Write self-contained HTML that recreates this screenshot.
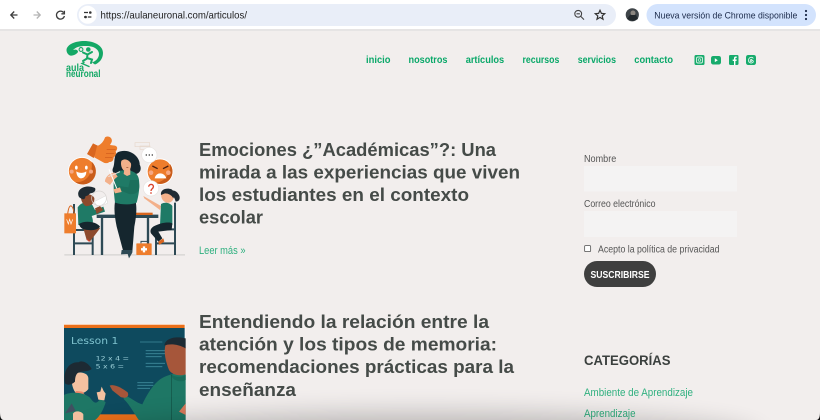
<!DOCTYPE html>
<html lang="es">
<head>
<meta charset="utf-8">
<title>Artículos - Aula Neuronal</title>
<style>
html,body{margin:0;padding:0;width:820px;height:420px;overflow:hidden;background:#f2eeed}
svg{display:block}
text{font-family:"Liberation Sans",sans-serif}
.h{font-size:18.5px;font-weight:700;fill:#454b48}
.nav{font-size:10px;font-weight:700;fill:#0aa869}
.lab{font-size:10px;fill:#555}
.lnk{font-size:11px;fill:#2fb07f}
</style>
</head>
<body>
<svg width="820" height="420" viewBox="0 0 820 420" xmlns="http://www.w3.org/2000/svg">
<defs>
<filter id="b" x="-20%" y="-150%" width="140%" height="400%"><feGaussianBlur stdDeviation="13"/></filter>
<clipPath id="c2"><rect x="64" y="324" width="122" height="96"/></clipPath>
<clipPath id="page"><rect width="820" height="420"/></clipPath>
</defs>
<g clip-path="url(#page)">
<rect width="820" height="420" fill="#f2eeed"/>

<!-- Chrome toolbar -->
<rect width="820" height="29" fill="#fff"/>
<rect y="29" width="820" height="2" fill="#e6e4e4"/>
<path d="M17.5 15H11M14.2 11.5L10.8 15l3.4 3.5" fill="none" stroke="#3c3c3c" stroke-width="1.3"/>
<path d="M33.5 15H40M36.8 11.5L40.2 15l-3.4 3.5" fill="none" stroke="#b4b4b4" stroke-width="1.3"/>
<path d="M63.6 12.6A4 4 0 1 0 64.4 16M64.4 10.8v3h-3" fill="none" stroke="#3c3c3c" stroke-width="1.3"/>
<rect x="77" y="4" width="539" height="22" rx="11" fill="#e9eef8"/>
<circle cx="87.7" cy="14.8" r="9" fill="#fff"/>
<path d="M84 12.5h4M84 17h1M87.8 17h3.600" stroke="#333" stroke-width="1.2" fill="none"/>
<circle cx="90.3" cy="12.5" r="1.3" fill="#333"/><circle cx="85.6" cy="17" r="1.3" fill="#333"/>
<text x="100.5" y="18.6" font-size="10.5" fill="#222" textLength="146.5" lengthAdjust="spacingAndGlyphs">https://aulaneuronal.com/articulos/</text>
<circle cx="578.2" cy="13.8" r="3.4" fill="none" stroke="#444" stroke-width="1.1"/>
<path d="M580.8 16.4l3.2 3.2M576.5 13.8h3.4" stroke="#444" stroke-width="1.1"/>
<path d="M600 10.3l1.4 3.1 3.3.3-2.5 2.2.8 3.3-3-1.8-3 1.8.8-3.3-2.5-2.2 3.3-.3z" fill="none" stroke="#333" stroke-width="1.2"/>
<circle cx="632.3" cy="14.8" r="6.6" fill="#3e4448"/>
<circle cx="633" cy="13" r="2.5" fill="#8b8680"/><path d="M627 19l3-4 6 0 2 4-5 2z" fill="#22282c"/>
<rect x="646.5" y="4" width="169.5" height="22" rx="11" fill="#d3e3fd"/>
<text x="654.3" y="18.4" font-size="9.5" fill="#1b2a4a" textLength="143" lengthAdjust="spacingAndGlyphs">Nueva versión de Chrome disponible</text>
<circle cx="806" cy="11" r="1.1" fill="#1b2a4a"/><circle cx="806" cy="15" r="1.1" fill="#1b2a4a"/><circle cx="806" cy="19" r="1.1" fill="#1b2a4a"/>

<!-- Logo -->
<path d="M66.5 50C67 44 76 41 84 41C95 41 103 46 103 53C103 59 99 63 95 64.500L92 62.500C96 61 99 58 99 54C99 49 93 45.500 85 46C80 46 76 47 73 50C76 49 78 50 78 52C76 55 72 56 70 55.500C68 54.500 66.500 52.500 66.500 50z" fill="#14a866"/>
<g fill="none" stroke="#14a866" stroke-linecap="round">
<path d="M83 52.500l4.500 2 4.500-2.500M87.500 54.500l-.5 4-4 2.500M87 58l5 1.500-1 3.500" stroke-width="2"/>
<path d="M84 62.500l-2 1 7 3" stroke-width="1.400"/>
</g>
<circle cx="88.300" cy="49.500" r="2.300" fill="#14a866"/>
<circle cx="81" cy="49.500" r="1.900" fill="none" stroke="#14a866" stroke-width="1.100"/>
<text x="66" y="71" font-size="10" font-weight="700" fill="#14a866" textLength="18" lengthAdjust="spacingAndGlyphs">aula</text>
<text x="66" y="77" font-size="10" font-weight="700" fill="#14a866" textLength="34.500" lengthAdjust="spacingAndGlyphs">neuronal</text>

<!-- Nav -->
<text class="nav" x="366" y="63" textLength="24.500" lengthAdjust="spacingAndGlyphs">inicio</text>
<text class="nav" x="408.500" y="63" textLength="39" lengthAdjust="spacingAndGlyphs">nosotros</text>
<text class="nav" x="465.700" y="63" textLength="38.500" lengthAdjust="spacingAndGlyphs">artículos</text>
<text class="nav" x="522.500" y="63" textLength="36.800" lengthAdjust="spacingAndGlyphs">recursos</text>
<text class="nav" x="577.700" y="63" textLength="38.300" lengthAdjust="spacingAndGlyphs">servicios</text>
<text class="nav" x="634.300" y="63" textLength="38.700" lengthAdjust="spacingAndGlyphs">contacto</text>

<!-- Social icons -->
<rect x="694.500" y="55" width="10" height="10" rx="1.500" fill="#17ab6c"/>
<rect x="696.500" y="57" width="6" height="6" rx="1.500" fill="none" stroke="#d9f0e6" stroke-width=".9"/>
<circle cx="699.500" cy="60" r="1.300" fill="none" stroke="#d9f0e6" stroke-width=".7"/>
<rect x="711" y="56" width="10" height="8.500" rx="2.200" fill="#17ab6c"/>
<path d="M714.800 58.300v3.800l3-1.900z" fill="#fff"/>
<rect x="729" y="55" width="9.500" height="10" rx="1.200" fill="#17ab6c"/>
<path d="M734 65v-4h-1.300v-1.500H734v-1.300c0-1.100.7-1.700 1.700-1.700h1v1.400h-.6c-.5 0-.7.2-.7.7v.9h1.300l-.2 1.500h-1.100v4z" fill="#fff"/>
<rect x="746" y="55" width="10" height="10" rx="2.200" fill="#17ab6c"/>
<path d="M753.300 58.500C752.800 57 750 56.800 749 58.500C748 60.200 748.300 62.500 750.500 63C752.500 63.300 753.800 62 753.200 60.800C752.500 59.700 750 60 750 61.200C750.200 62.200 752 62 752.100 60.500C752.100 59.200 751 59 750.300 59.600" fill="none" stroke="#e6f6ef" stroke-width=".8"/>

<!-- Illustration 1 -->
<g transform="translate(55 130) scale(.33333)">
<rect x="28" y="372" width="362" height="5" fill="#dcdad8"/>
<rect x="240" y="38" width="44" height="12" fill="none" stroke="#e8d8cc" stroke-width="2"/>
<rect x="255" y="48" width="30" height="10" fill="none" stroke="#e8d8cc" stroke-width="2"/>
<!-- thumb -->
<path d="M114 40L96 72L116 84L134 50z" fill="#d9661f"/>
<path d="M126 48C138 44 146 34 150 22C160 15 174 24 170 36L165 45L180 47C190 50 187 60 182 64C186 72 180 80 176 82C176 92 170 96 163 96C158 101 150 100 145 97L118 82z" fill="#ee7d2c"/>
<path d="M155 58H182M153 70H178M150 82H172" stroke="#cf5a18" stroke-width="2"/>
<!-- smiley -->
<circle cx="81" cy="123" r="42" fill="#fff"/>
<circle cx="81" cy="123" r="39.500" fill="#ee7d2c"/>
<path d="M110 95A39.500 39.500 0 0 1 60 156C90 160 115 135 110 95z" fill="#c95c1a"/>
<ellipse cx="64" cy="113" rx="4" ry="6" fill="#fff"/><ellipse cx="94" cy="113" rx="4" ry="6" fill="#fff"/>
<path d="M64 124C72 130 86 130 94 124C94 140 84 145 78 145C70 145 64 135 64 124z" fill="#fff"/>
<circle cx="50" cy="125" r="6" fill="#f6a883"/><circle cx="108" cy="125" r="6" fill="#f6a883"/>
<!-- angry -->
<circle cx="315" cy="125" r="40" fill="#fff"/>
<circle cx="315" cy="125" r="37" fill="#ee7d2c"/>
<path d="M345 102A37 37 0 0 1 300 158C325 158 348 135 345 102z" fill="#c95c1a"/>
<path d="M292 108l16 8M340 108l-16 8" stroke="#4a2012" stroke-width="4"/>
<path d="M299 145C303 125 328 125 334 145z" fill="#fff"/>
<circle cx="288" cy="128" r="7" fill="#f6a883"/><circle cx="340" cy="128" r="7" fill="#f6a883"/>
<!-- bubbles -->
<circle cx="283" cy="75" r="23" fill="#fff" stroke="#e8e4e2" stroke-width="2"/>
<rect x="272" y="73" width="4" height="4" fill="#444"/><rect x="281" y="73" width="4" height="4" fill="#444"/><rect x="290" y="73" width="4" height="4" fill="#444"/>
<circle cx="288" cy="175" r="23" fill="#fff" stroke="#e8e4e2" stroke-width="2"/>
<path d="M281 170C282 160 297 162 295 171C294 177 288 176 288 183" fill="none" stroke="#d9422c" stroke-width="4"/>
<circle cx="288" cy="189" r="2.500" fill="#d9422c"/>
<!-- chairs -->
<path d="M57 222V375M113 300V375M57 300H113M57 340H113" stroke="#2e4a55" stroke-width="6" fill="none"/>
<path d="M360 218V375M303 300V375M303 298H360M303 340H360" stroke="#2e4a55" stroke-width="6" fill="none"/>
<!-- bag -->
<path d="M38 252C42 220 52 220 58 250" fill="none" stroke="#d9661f" stroke-width="3"/>
<rect x="28" y="250" width="35" height="60" fill="#ee7d2c"/>
<path d="M35 268l5 14 4-14 4 14 5-14" stroke="#fff" stroke-width="2" fill="none"/>
<!-- left kid -->
<path d="M85 295C95 285 125 285 135 295L112 325L104 335L95 330z" fill="#8d4a2d"/>
<path d="M68 232C82 212 105 215 112 225L120 240L145 230L150 245L110 258C115 270 115 280 110 285H70z" fill="#1f7a66"/>
<path d="M72 282C90 270 125 275 135 290C130 300 110 302 100 300C85 300 75 295 72 282z" fill="#16262e"/>
<path d="M78 196C88 190 112 190 118 204C120 220 106 230 92 228C84 224 76 210 78 196z" fill="#8d4a2d"/>
<path d="M70 195C66 175 95 162 120 174C125 185 112 190 105 190C100 196 96 198 92 198C90 208 86 210 80 206C75 205 70 200 70 195z" fill="#1f2b33"/>
<path d="M118 215l35-18 5 22-28 14z" fill="#fff" stroke="#c9c6c4"/>
<path d="M120 235L135 228L145 240L125 252z" fill="#8d4a2d"/>
<circle cx="132" cy="205" r="22" fill="none" stroke="#d8d4d2" stroke-width="2"/>
<!-- table -->
<path d="M125 254H310V264H125z" fill="#2e4a55"/>
<path d="M141 264V375M279 264V375" stroke="#2e4a55" stroke-width="7"/>
<rect x="243" y="248" width="50" height="7" fill="#d9661f"/>
<!-- teacher -->
<path d="M196 64C172 68 182 100 174 114C168 128 182 136 196 132H236C254 134 262 118 254 104C256 84 230 56 196 64z" fill="#15262e"/>
<path d="M180 215C176 240 180 265 185 290L205 365H232L238 290C244 260 246 235 242 215z" fill="#15262e"/>
<path d="M200 360H232V368L222 385L218 372L198 373z" fill="#2e4a55"/>
<path d="M195 122C170 130 175 175 180 218C200 225 230 225 245 218C250 200 255 175 252 150C250 130 235 124 220 120z" fill="#1f7a66"/>
<path d="M250 150C258 180 250 195 222 192L185 176L190 168L220 172L225 150z" fill="#1b6f5c"/>
<path d="M180 128C160 128 150 145 150 155L165 165C172 155 180 145 188 140z" fill="#f3b08a"/>
<path d="M175 178L195 172L200 186L180 190z" fill="#f3b08a"/>
<path d="M208 118H226V134L216 138L206 132z" fill="#f3b08a"/>
<path d="M203 86C212 82 226 90 228 100C230 115 222 126 212 124C204 122 198 112 198 100C198 94 200 90 203 86z" fill="#f3b08a"/>
<path d="M200 92C208 84 222 88 230 104C234 88 222 74 208 76C200 78 196 86 200 92z" fill="#15262e"/>
<path d="M214 112h6" stroke="#8d4a2d" stroke-width="2"/>
<path d="M162 118L185 175" stroke="#fff" stroke-width="3"/><path d="M160 140L195 125" stroke="#e8e4e2" stroke-width="3"/>
<!-- girl -->
<path d="M345 185C352 178 365 182 372 195C378 208 370 215 362 215C358 200 352 195 345 185z" fill="#1f2b33"/>
<path d="M320 185C325 175 350 178 355 190C360 205 352 220 335 218C322 215 315 200 320 185z" fill="#f3b08a"/>
<path d="M318 195C315 178 335 172 350 178C358 185 360 195 355 205C350 195 340 190 330 190z" fill="#1f2b33"/>
<path d="M265 198L318 228L315 240L268 205z" fill="#f3b08a"/>
<path d="M318 222C330 215 345 218 352 228L352 285H315z" fill="#1f7a66"/>
<path d="M352 280C345 275 320 278 305 285C290 290 283 300 288 310L310 335L322 325L310 305L350 300z" fill="#15262e"/>
<path d="M310 335L325 325L328 335L312 345z" fill="#d9661f"/>
<!-- kit -->
<path d="M258 340V334H278V340" fill="none" stroke="#2e4a55" stroke-width="3"/>
<rect x="244" y="340" width="46" height="35" rx="2" fill="#ee7d2c"/>
<path d="M258 358h18M267 349v18" stroke="#fff" stroke-width="7"/>
<path d="M95 325L108 335L100 334z" fill="#d9422c"/>
</g>

<!-- Illustration 2 -->
<g clip-path="url(#c2)">
<g transform="translate(55 315) scale(.33333)">
<rect x="27" y="27" width="364" height="290" fill="#fff"/>
<rect x="27" y="29" width="362" height="10" fill="#ea6f1a"/>
<rect x="27" y="39" width="362" height="260" fill="#0e4a5e"/>
<rect x="120" y="298" width="176" height="17" fill="#ea6f1a"/>
<text x="48" y="87" font-size="30" fill="#7fc3cf" textLength="142" lengthAdjust="spacingAndGlyphs" style="font-family:'DejaVu Sans',sans-serif">Lesson 1</text>
<text x="122" y="136" font-size="18" fill="#9dd0d9" textLength="100" lengthAdjust="spacingAndGlyphs" style="font-family:'DejaVu Sans',sans-serif">12 x 4 =</text>
<text x="122" y="161" font-size="18" fill="#9dd0d9" textLength="85" lengthAdjust="spacingAndGlyphs" style="font-family:'DejaVu Sans',sans-serif">5 x 6 =</text>
<g stroke="#3f8a9c" stroke-width="2.500">
<path d="M255 81H322M272 107H330M272 116H330M272 125H320M272 145H330M272 155H322M247 203H295M247 211H295M247 220H285"/>
</g>
<!-- man -->
<path d="M206 240C225 245 240 262 262 268C275 240 295 205 320 190C345 175 380 172 392 178V320H255C240 300 225 270 206 252z" fill="#1e7765"/>
<path d="M164 212C178 205 205 222 218 232C224 245 212 252 197 246L172 226z" fill="#a6563a"/>
<path d="M332 88C352 78 392 85 392 100V178C370 185 350 178 342 165C332 140 325 110 332 88z" fill="#a6563a"/>
<path d="M328 92C330 70 360 62 392 70V100C370 88 345 85 328 92z" fill="#1d2a33"/>
<path d="M345 175C355 185 375 190 392 180V195C375 205 350 195 345 175z" fill="#186b5a"/>
<path d="M350 180V320" stroke="#135245" stroke-width="2"/>
<path d="M372 290L392 265V300z" fill="#d9795a"/>
<!-- boy -->
<path d="M52 180C75 165 100 175 100 190V222C90 238 65 238 58 228C50 212 48 195 52 180z" fill="#f4c1a0"/>
<path d="M30 205C22 165 45 140 70 142C85 132 105 150 110 162C100 170 85 168 72 172C62 175 60 190 60 200C50 210 38 212 30 205z" fill="#1d2a33"/>
<path d="M56 238L64 228L82 230L90 240L75 250z" fill="#ef8467"/>
<path d="M27 240C45 230 85 230 105 248C120 270 125 265 138 250L152 262C145 285 130 315 110 320H27z" fill="#1e7765"/>
<path d="M125 232L136 230L140 215L146 228L152 236L148 256L130 254z" fill="#f4c1a0"/>
<path d="M30 295L50 265L62 288z" fill="#405060"/>
<path d="M54 296C60 285 80 288 85 298V320H54z" fill="#f4c1a0"/>
</g>
</g>

<!-- Articles -->
<text class="h" x="199" y="156" textLength="297" lengthAdjust="spacingAndGlyphs">Emociones ¿”Académicas”?: Una</text>
<text class="h" x="199" y="178.600" textLength="321" lengthAdjust="spacingAndGlyphs">mirada a las experiencias que viven</text>
<text class="h" x="199" y="201" textLength="270" lengthAdjust="spacingAndGlyphs">los estudiantes en el contexto</text>
<text class="h" x="199" y="223.500" textLength="64" lengthAdjust="spacingAndGlyphs">escolar</text>
<text class="lnk" x="199" y="254" textLength="46.500" lengthAdjust="spacingAndGlyphs">Leer más »</text>

<text class="h" x="199" y="328" textLength="290" lengthAdjust="spacingAndGlyphs">Entendiendo la relación entre la</text>
<text class="h" x="199" y="350.500" textLength="298" lengthAdjust="spacingAndGlyphs">atención y los tipos de memoria:</text>
<text class="h" x="199" y="373" textLength="315" lengthAdjust="spacingAndGlyphs">recomendaciones prácticas para la</text>
<text class="h" x="199" y="396" textLength="97" lengthAdjust="spacingAndGlyphs">enseñanza</text>

<!-- Sidebar form -->
<text class="lab" x="584" y="162" textLength="32.300" lengthAdjust="spacingAndGlyphs">Nombre</text>
<rect x="584" y="166" width="153" height="25.500" fill="#f4f3f3"/>
<text class="lab" x="584" y="207" textLength="71.500" lengthAdjust="spacingAndGlyphs">Correo electrónico</text>
<rect x="584" y="211" width="153" height="26" fill="#f4f3f3"/>
<rect x="584.600" y="245.600" width="6" height="6" rx="1" fill="#fff" stroke="#666" stroke-width=".9"/>
<text class="lab" x="598" y="252.500" textLength="121.500" lengthAdjust="spacingAndGlyphs">Acepto la política de privacidad</text>
<rect x="584" y="261" width="72" height="26" rx="13" fill="#3f3f3f"/>
<text x="590.500" y="277.800" font-size="10" font-weight="700" fill="#fff" textLength="59" lengthAdjust="spacingAndGlyphs">SUSCRIBIRSE</text>

<text x="584" y="365" font-size="13.500" font-weight="700" fill="#3b403e" textLength="86.500" lengthAdjust="spacingAndGlyphs">CATEGORÍAS</text>
<text class="lnk" x="584" y="396" textLength="109" lengthAdjust="spacingAndGlyphs">Ambiente de Aprendizaje</text>
<text class="lnk" x="584" y="417" textLength="51.500" lengthAdjust="spacingAndGlyphs">Aprendizaje</text>

<!-- Bottom window shadow and corners -->
<ellipse cx="420" cy="440" rx="340" ry="26" fill="#000" opacity=".24" filter="url(#b)"/>
<path d="M0 412C0 417 1 420 4 420H0z" fill="#111"/>
<path d="M820 412C820 417 819 420 816 420H820z" fill="#111"/>
</g>
</svg>
</body>
</html>
